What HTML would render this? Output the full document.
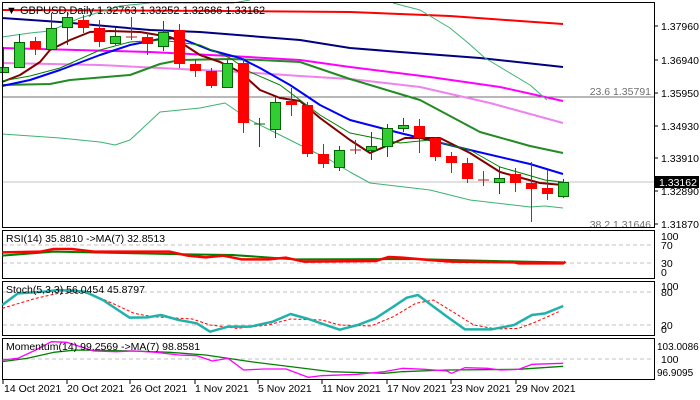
<!DOCTYPE html>
<html><head><meta charset="utf-8"><style>
html,body{margin:0;padding:0;background:#fff;width:700px;height:400px;overflow:hidden}
svg{display:block;font-family:"Liberation Sans",Tahoma,sans-serif;font-size:10.5px}
</style></head><body>
<svg width="700" height="400" viewBox="0 0 700 400" xmlns="http://www.w3.org/2000/svg">
<rect width="700" height="400" fill="#fff"/>
<line x1="2" y1="97" x2="654" y2="97" stroke="#707070" stroke-width="1"/>
<line x1="2" y1="182" x2="654" y2="182" stroke="#c0c0c0" stroke-width="1"/>
<g fill="none" stroke-linejoin="round">
<polyline stroke="#ff0000" stroke-width="2" points="2,10 230,11 350,12 450,16 520,21 563,24"/>
<polyline stroke="#000080" stroke-width="2" points="2,18 60,22 150,30 200,32 300,40 350,48 400,52 480,58 563,67"/>
<polyline stroke="#ff00ff" stroke-width="2" points="2,48 150,52 230,56 300,60 350,67 430,77 500,87 563,101"/>
<polyline stroke="#ee82ee" stroke-width="2" points="2,63 100,65 200,70 240,72 300,76 350,79 420,87 490,103 563,123"/>
<polyline stroke="#228b22" stroke-width="2" points="2,85 50,84 70,80 130,75 160,64 180,60 230,59 260,60 300,62 350,79 420,100 480,132 530,146 563,153"/>
<polyline stroke="#0000ff" stroke-width="2" points="2,86 30,80 60,70 100,55 130,45 160,39 180,38 210,50 240,58 260,68 290,85 320,105 350,120 400,133 470,150 530,164 563,174"/>
<polyline stroke="#800000" stroke-width="2" points="2,82 20,75 40,62 50,50 70,40 90,32 110,31 140,32 170,37 180,42 200,55 220,62 240,72 260,90 280,98 300,101 320,118 350,140 370,153 405,138 440,138 470,153 500,172 540,183 563,185"/>
<polyline stroke="#3cb371" stroke-width="1" points="2,37 30,33 50,31 80,18 120,6 150,3 233,3 250,0"/>
<polyline stroke="#3cb371" stroke-width="1" points="393,3 420,10 450,28 467,42 485,58 530,85 547,100"/>
<polyline stroke="#008000" stroke-width="1" points="2,81 30,76 60,68 100,50 130,42 160,40 200,45 230,58 250,72 280,85 300,100 320,115 350,133 400,143 430,140 470,150 500,167 545,180 563,182"/>
<polyline stroke="#3cb371" stroke-width="1" points="2,134 60,138 100,142 115,145 130,140 160,112 200,108 225,103 250,120 280,135 330,160 350,172 370,183 430,190 470,200 530,207 545,206 563,208"/>
</g>
<g stroke-width="1">
<g stroke="#006400"><line x1="3.5" y1="47" x2="3.5" y2="73"/><line x1="19.5" y1="34" x2="19.5" y2="68"/><line x1="51.5" y1="13" x2="51.5" y2="50"/><line x1="67.5" y1="12" x2="67.5" y2="45"/><line x1="115.5" y1="28" x2="115.5" y2="45"/><line x1="163.5" y1="21" x2="163.5" y2="51"/><line x1="227.5" y1="60" x2="227.5" y2="88"/><line x1="259.5" y1="118" x2="259.5" y2="147"/><line x1="254" y1="124" x2="265" y2="124"/><line x1="275.5" y1="97" x2="275.5" y2="138"/><line x1="339.5" y1="146" x2="339.5" y2="171"/><line x1="371.5" y1="132" x2="371.5" y2="160"/><line x1="387.5" y1="124" x2="387.5" y2="157"/><line x1="403.5" y1="118" x2="403.5" y2="132"/><line x1="499.5" y1="167" x2="499.5" y2="194"/><line x1="563.5" y1="179" x2="563.5" y2="198"/></g>
<g stroke="#b22222"><line x1="35.5" y1="37" x2="35.5" y2="55"/><line x1="83.5" y1="15" x2="83.5" y2="33"/><line x1="99.5" y1="20" x2="99.5" y2="47"/><line x1="131.5" y1="17" x2="131.5" y2="40"/><line x1="126" y1="37" x2="137" y2="37"/><line x1="147.5" y1="32" x2="147.5" y2="55"/><line x1="179.5" y1="24" x2="179.5" y2="68"/><line x1="195.5" y1="59" x2="195.5" y2="77"/><line x1="211.5" y1="68" x2="211.5" y2="88"/><line x1="243.5" y1="58" x2="243.5" y2="133"/><line x1="291.5" y1="88" x2="291.5" y2="116"/><line x1="307.5" y1="102" x2="307.5" y2="157"/><line x1="323.5" y1="144" x2="323.5" y2="168"/><line x1="355.5" y1="140" x2="355.5" y2="154"/><line x1="350" y1="150" x2="361" y2="150"/><line x1="419.5" y1="119" x2="419.5" y2="153"/><line x1="435.5" y1="137" x2="435.5" y2="161"/><line x1="451.5" y1="152" x2="451.5" y2="173"/><line x1="467.5" y1="158" x2="467.5" y2="183"/><line x1="483.5" y1="171" x2="483.5" y2="186"/><line x1="478" y1="180" x2="489" y2="180"/><line x1="515.5" y1="168" x2="515.5" y2="192"/><line x1="531.5" y1="162" x2="531.5" y2="222"/><line x1="547.5" y1="170" x2="547.5" y2="200"/></g>
<g fill="#32cd32" stroke="#006400"><rect x="-1.5" y="67.5" width="10" height="5"/><rect x="14.5" y="42.5" width="10" height="25"/><rect x="46.5" y="28.5" width="10" height="21"/><rect x="62.5" y="17.5" width="10" height="10"/><rect x="110.5" y="36.5" width="10" height="7"/><rect x="158.5" y="32.5" width="10" height="14"/><rect x="222.5" y="63.5" width="10" height="24"/><rect x="270.5" y="102.5" width="10" height="27"/><rect x="334.5" y="150.5" width="10" height="17"/><rect x="366.5" y="146.5" width="10" height="4"/><rect x="382.5" y="128.5" width="10" height="18"/><rect x="398.5" y="125.5" width="10" height="3"/><rect x="494.5" y="178.5" width="10" height="4"/><rect x="558.5" y="182.5" width="10" height="14"/></g>
<g fill="#ff0000"><rect x="30" y="41" width="11" height="8"/><rect x="78" y="20" width="11" height="8"/><rect x="94" y="28" width="11" height="14"/><rect x="142" y="37" width="11" height="7"/><rect x="174" y="30" width="11" height="34"/><rect x="190" y="64" width="11" height="7"/><rect x="206" y="71" width="11" height="15"/><rect x="238" y="63" width="11" height="60"/><rect x="286" y="101" width="11" height="4"/><rect x="302" y="105" width="11" height="49"/><rect x="318" y="154" width="11" height="10"/><rect x="414" y="126" width="11" height="12"/><rect x="430" y="138" width="11" height="19"/><rect x="446" y="156" width="11" height="7"/><rect x="462" y="163" width="11" height="16"/><rect x="510" y="174" width="11" height="9"/><rect x="526" y="183" width="11" height="6"/><rect x="542" y="188" width="11" height="6"/></g>
</g>
<text x="6" y="14" font-size="11" fill="#000">▼ GBPUSD,Daily  1.32763 1.33252 1.32686 1.33162</text>
<text x="651" y="95" text-anchor="end" fill="#707070">23.6 1.35791</text>
<text x="651" y="228" text-anchor="end" fill="#707070">38.2 1.31646</text>
<g fill="none" stroke="#000" stroke-width="1">
<rect x="2.5" y="2.5" width="652" height="225"/>
<rect x="2.5" y="230.5" width="652" height="48"/>
<rect x="2.5" y="281.5" width="652" height="54"/>
<rect x="2.5" y="338.5" width="652" height="41"/>
</g>
<g fill="#000">
<text x="661" y="30">1.37960</text><text x="661" y="64">1.36940</text><text x="661" y="97">1.35950</text><text x="661" y="130">1.34930</text><text x="661" y="162">1.33910</text><text x="661" y="195">1.32890</text><text x="661" y="228">1.31870</text>
</g>
<g stroke="#000"><line x1="655" y1="26" x2="658" y2="26"/><line x1="655" y1="60" x2="658" y2="60"/><line x1="655" y1="93" x2="658" y2="93"/><line x1="655" y1="126" x2="658" y2="126"/><line x1="655" y1="158" x2="658" y2="158"/><line x1="655" y1="191" x2="658" y2="191"/><line x1="655" y1="224" x2="658" y2="224"/></g>
<rect x="655" y="176" width="44" height="12" fill="#000"/>
<text x="659" y="186" fill="#fff">1.33162</text>
<g stroke="#c0c0c0" stroke-dasharray="4,3">
<line x1="3" y1="245" x2="654" y2="245"/><line x1="3" y1="263" x2="654" y2="263"/>
<line x1="3" y1="292" x2="654" y2="292"/><line x1="3" y1="325" x2="654" y2="325"/>
<line x1="3" y1="359" x2="654" y2="359"/>
</g>
<g fill="none" stroke-linejoin="round" transform="translate(0,225) scale(0.447,0.33333)">
<polyline stroke="#008000" stroke-width="2" vector-effect="non-scaling-stroke" points="5,92 120,80 420,88 520,90 660,103 920,102 1170,110 1260,112"/>
<polyline stroke="#ff0000" stroke-width="2.5" vector-effect="non-scaling-stroke" points="5,82 90,80 120,72 160,72 210,80 380,80 420,92 460,97 500,92 540,103 600,103 640,98 680,110 840,108 870,96 900,98 960,105 1010,110 1150,112 1160,115 1260,115 1265,110"/>
<polyline stroke="#ff0000" stroke-width="1" stroke-dasharray="3,2" vector-effect="non-scaling-stroke" points="5,250 80,220 130,205 200,205 260,240 300,265 340,275 380,278 430,282 470,300 530,310 600,300 650,282 720,285 760,300 830,303 880,275 930,235 970,225 1010,258 1060,300 1110,312 1160,310 1200,290 1250,260"/>
<polyline stroke="#20b2aa" stroke-width="2.5" vector-effect="non-scaling-stroke" points="5,240 40,205 100,200 130,195 190,200 230,225 290,278 330,277 360,270 400,285 440,295 470,320 510,305 560,305 610,290 650,267 690,282 740,305 760,314 800,300 840,280 880,245 910,218 935,210 960,235 1000,275 1040,313 1100,313 1150,300 1190,270 1220,265 1260,243"/>
<polyline stroke="#008000" stroke-width="1.3" vector-effect="non-scaling-stroke" points="5,410 60,400 120,382 170,375 300,378 380,382 460,390 560,410 740,440 860,445 900,440 1000,435 1160,433 1260,424"/>
<polyline stroke="#ff00ff" stroke-width="1.3" vector-effect="non-scaling-stroke" points="5,405 40,400 80,375 115,350 150,352 210,378 260,380 300,378 350,382 400,390 440,392 475,408 510,400 545,435 590,432 640,432 690,457 720,452 800,448 860,440 900,430 950,433 1000,438 1010,445 1040,428 1090,430 1120,435 1160,433 1190,418 1260,415"/>
</g>
<g fill="#000">
<text x="6" y="242">RSI(14) 35.8810  -&gt;MA(7) 32.8513</text>
<text x="6" y="293">Stoch(5,3,3) 56.0454 45.8797</text>
<text x="6" y="350">Momentum(14) 99.2569  -&gt;MA(7) 98.8581</text>
<text x="661" y="240">100</text><text x="661" y="249">70</text><text x="661" y="267">30</text><text x="661" y="276">0</text>
<text x="661" y="290">100</text><text x="661" y="296">80</text><text x="661" y="329">20</text><text x="661" y="333">0</text>
<text x="657" y="350" font-size="10">103.0086</text><text x="661" y="363">100</text><text x="657" y="376" font-size="10">96.9095</text>
<text x="4" y="392">14 Oct 2021</text><text x="67" y="392">20 Oct 2021</text><text x="130" y="392">26 Oct 2021</text><text x="195" y="392">1 Nov 2021</text><text x="258" y="392">5 Nov 2021</text><text x="322" y="392">11 Nov 2021</text><text x="387" y="392">17 Nov 2021</text><text x="451" y="392">23 Nov 2021</text><text x="516" y="392">29 Nov 2021</text>
</g>
<g stroke="#000"><line x1="3" y1="380" x2="3" y2="384"/><line x1="67" y1="380" x2="67" y2="384"/><line x1="130" y1="380" x2="130" y2="384"/><line x1="195" y1="380" x2="195" y2="384"/><line x1="258" y1="380" x2="258" y2="384"/><line x1="322" y1="380" x2="322" y2="384"/><line x1="387" y1="380" x2="387" y2="384"/><line x1="451" y1="380" x2="451" y2="384"/><line x1="516" y1="380" x2="516" y2="384"/></g>
</svg>
</body></html>
